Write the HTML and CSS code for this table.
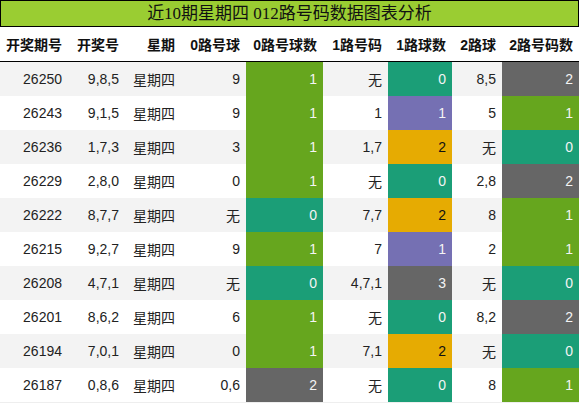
FILE: index.html
```html
<!DOCTYPE html>
<html lang="zh">
<head>
<meta charset="utf-8">
<link rel="stylesheet" href="styles.css">
</head>
<body>
<div class="wrap">
  <div class="title">近10期星期四 012路号码数据图表分析</div>
  <table class="tbl">
    <colgroup>
      <col class="c1"><col class="c2"><col class="c3"><col class="c4"><col class="c5"><col class="c6"><col class="c7"><col class="c8"><col class="c9">
    </colgroup>
    <thead>
      <tr><th>开奖期号</th><th>开奖号</th><th>星期</th><th>0路号球</th><th>0路号球数</th><th>1路号码</th><th>1路球数</th><th>2路球</th><th>2路号码数</th></tr>
    </thead>
    <tbody>
      <tr><td>26250</td><td>9,8,5</td><td>星期四</td><td>9</td><td class="g">1</td><td>无</td><td class="t">0</td><td>8,5</td><td class="k">2</td></tr>
      <tr><td>26243</td><td>9,1,5</td><td>星期四</td><td>9</td><td class="g">1</td><td>1</td><td class="p">1</td><td>5</td><td class="g">1</td></tr>
      <tr><td>26236</td><td>1,7,3</td><td>星期四</td><td>3</td><td class="g">1</td><td>1,7</td><td class="y">2</td><td>无</td><td class="t">0</td></tr>
      <tr><td>26229</td><td>2,8,0</td><td>星期四</td><td>0</td><td class="g">1</td><td>无</td><td class="t">0</td><td>2,8</td><td class="k">2</td></tr>
      <tr><td>26222</td><td>8,7,7</td><td>星期四</td><td>无</td><td class="t">0</td><td>7,7</td><td class="y">2</td><td>8</td><td class="g">1</td></tr>
      <tr><td>26215</td><td>9,2,7</td><td>星期四</td><td>9</td><td class="g">1</td><td>7</td><td class="p">1</td><td>2</td><td class="g">1</td></tr>
      <tr><td>26208</td><td>4,7,1</td><td>星期四</td><td>无</td><td class="t">0</td><td>4,7,1</td><td class="k">3</td><td>无</td><td class="t">0</td></tr>
      <tr><td>26201</td><td>8,6,2</td><td>星期四</td><td>6</td><td class="g">1</td><td>无</td><td class="t">0</td><td>8,2</td><td class="k">2</td></tr>
      <tr><td>26194</td><td>7,0,1</td><td>星期四</td><td>0</td><td class="g">1</td><td>7,1</td><td class="y">2</td><td>无</td><td class="t">0</td></tr>
      <tr><td>26187</td><td>0,8,6</td><td>星期四</td><td>0,6</td><td class="k">2</td><td>无</td><td class="t">0</td><td>8</td><td class="g">1</td></tr>
    </tbody>
  </table>
</div>
</body>
</html>
```

FILE: styles.css
```css
html, body {
  margin: 0;
  padding: 0;
  background: #ffffff;
}
.wrap {
  width: 579px;
}
.title {
  box-sizing: border-box;
  height: 27px;
  border: 1px solid #000;
  background: #9acd32;
  color: #111;
  font-family: "Liberation Serif", "Noto Sans CJK SC", serif;
  font-size: 17px;
  line-height: 25px;
  text-align: center;
}
.tbl {
  width: 579px;
  border-collapse: collapse;
  table-layout: fixed;
  font-family: "Liberation Sans", "Noto Sans CJK SC", sans-serif;
  font-size: 14px;
  color: #222;
}
.c1 { width: 68px; }
.c2 { width: 57px; }
.c3 { width: 56px; }
.c4 { width: 65px; }
.c5 { width: 77px; }
.c6 { width: 65px; }
.c7 { width: 64px; }
.c8 { width: 50px; }
.c9 { width: 77px; }
.tbl th {
  height: 34px;
  padding: 0 6px 0 0;
  text-align: right;
  font-weight: bold;
  color: #111;
  border-bottom: 1px solid #000;
  white-space: nowrap;
}
.tbl td {
  height: 34px;
  padding: 0 6px 0 0;
  text-align: right;
  white-space: nowrap;
}
.tbl tbody tr:nth-child(odd) td { background: #f3f3f3; }
.tbl tbody tr:last-child td { border-bottom: 1px solid #eeeeee; }
.tbl tbody tr td.g { background: #66a61e; color: #f4f4f4; }
.tbl tbody tr td.t { background: #1b9e77; color: #f4f4f4; }
.tbl tbody tr td.k { background: #666666; color: #f4f4f4; }
.tbl tbody tr td.p { background: #7570b3; color: #f4f4f4; }
.tbl tbody tr td.y { background: #e6ab02; color: #111; }
```
